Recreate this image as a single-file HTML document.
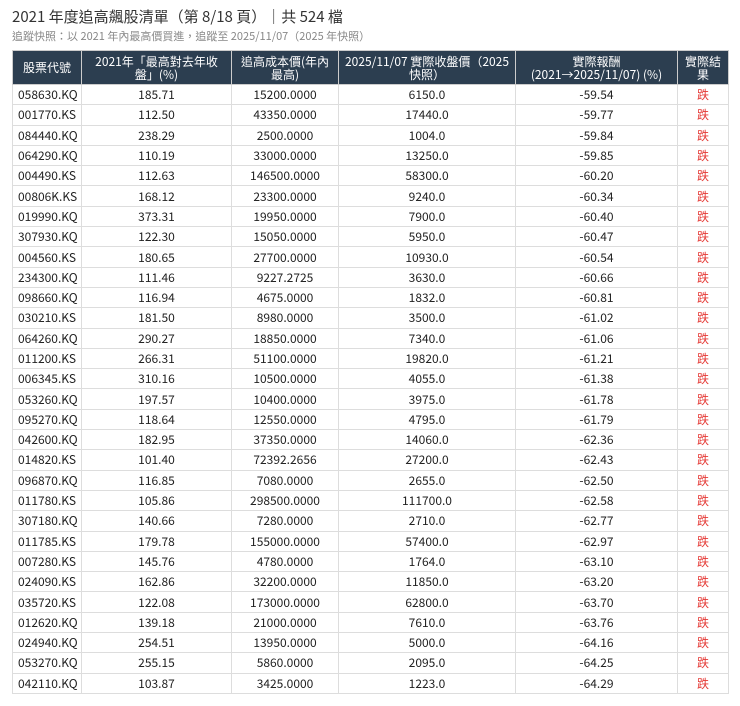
<!DOCTYPE html>
<html><head><meta charset="utf-8"><style>
body{margin:0;background:#fff;font-family:"Noto Sans CJK TC","Liberation Sans",sans-serif;color:#222}
.t{position:absolute;left:12px;top:6px;font-size:15px;color:#333;line-height:22px}
.s{position:absolute;left:12px;top:28px;font-size:11px;color:#888;line-height:16px}
table{position:absolute;left:12px;top:50px;border-collapse:collapse;width:716px;table-layout:fixed;font-size:12px}
th{background:#2c3e50;color:#fff;font-weight:normal;height:33px;line-height:13px;border:1px solid #ccc;padding:0 3px;text-align:center}
td{height:19.3px;border:1px solid #ddd;text-align:center;padding:0;line-height:19px}
td:first-child{text-align:left;padding-left:5px}
td.r{color:#e53935}
</style></head><body>
<div class="t">2021 年度追高飆股清單（第 8/18 頁）｜共 524 檔</div>
<div class="s">追蹤快照：以 2021 年內最高價買進，追蹤至 2025/11/07（2025 年快照）</div>
<table>
<colgroup><col style="width:69px"><col style="width:150px"><col style="width:107px"><col style="width:177px"><col style="width:162px"><col style="width:51px"></colgroup>
<tr><th>股票代號</th><th>2021年「最高對去年收<br>盤」(%)</th><th>追高成本價(年內<br>最高)</th><th>2025/11/07 實際收盤價（2025<br>快照）</th><th>實際報酬<br>(2021→2025/11/07) (%)</th><th>實際結<br>果</th></tr>
<tr><td>058630.KQ</td><td>185.71</td><td>15200.0000</td><td>6150.0</td><td>-59.54</td><td class="r">跌</td></tr>
<tr><td>001770.KS</td><td>112.50</td><td>43350.0000</td><td>17440.0</td><td>-59.77</td><td class="r">跌</td></tr>
<tr><td>084440.KQ</td><td>238.29</td><td>2500.0000</td><td>1004.0</td><td>-59.84</td><td class="r">跌</td></tr>
<tr><td>064290.KQ</td><td>110.19</td><td>33000.0000</td><td>13250.0</td><td>-59.85</td><td class="r">跌</td></tr>
<tr><td>004490.KS</td><td>112.63</td><td>146500.0000</td><td>58300.0</td><td>-60.20</td><td class="r">跌</td></tr>
<tr><td>00806K.KS</td><td>168.12</td><td>23300.0000</td><td>9240.0</td><td>-60.34</td><td class="r">跌</td></tr>
<tr><td>019990.KQ</td><td>373.31</td><td>19950.0000</td><td>7900.0</td><td>-60.40</td><td class="r">跌</td></tr>
<tr><td>307930.KQ</td><td>122.30</td><td>15050.0000</td><td>5950.0</td><td>-60.47</td><td class="r">跌</td></tr>
<tr><td>004560.KS</td><td>180.65</td><td>27700.0000</td><td>10930.0</td><td>-60.54</td><td class="r">跌</td></tr>
<tr><td>234300.KQ</td><td>111.46</td><td>9227.2725</td><td>3630.0</td><td>-60.66</td><td class="r">跌</td></tr>
<tr><td>098660.KQ</td><td>116.94</td><td>4675.0000</td><td>1832.0</td><td>-60.81</td><td class="r">跌</td></tr>
<tr><td>030210.KS</td><td>181.50</td><td>8980.0000</td><td>3500.0</td><td>-61.02</td><td class="r">跌</td></tr>
<tr><td>064260.KQ</td><td>290.27</td><td>18850.0000</td><td>7340.0</td><td>-61.06</td><td class="r">跌</td></tr>
<tr><td>011200.KS</td><td>266.31</td><td>51100.0000</td><td>19820.0</td><td>-61.21</td><td class="r">跌</td></tr>
<tr><td>006345.KS</td><td>310.16</td><td>10500.0000</td><td>4055.0</td><td>-61.38</td><td class="r">跌</td></tr>
<tr><td>053260.KQ</td><td>197.57</td><td>10400.0000</td><td>3975.0</td><td>-61.78</td><td class="r">跌</td></tr>
<tr><td>095270.KQ</td><td>118.64</td><td>12550.0000</td><td>4795.0</td><td>-61.79</td><td class="r">跌</td></tr>
<tr><td>042600.KQ</td><td>182.95</td><td>37350.0000</td><td>14060.0</td><td>-62.36</td><td class="r">跌</td></tr>
<tr><td>014820.KS</td><td>101.40</td><td>72392.2656</td><td>27200.0</td><td>-62.43</td><td class="r">跌</td></tr>
<tr><td>096870.KQ</td><td>116.85</td><td>7080.0000</td><td>2655.0</td><td>-62.50</td><td class="r">跌</td></tr>
<tr><td>011780.KS</td><td>105.86</td><td>298500.0000</td><td>111700.0</td><td>-62.58</td><td class="r">跌</td></tr>
<tr><td>307180.KQ</td><td>140.66</td><td>7280.0000</td><td>2710.0</td><td>-62.77</td><td class="r">跌</td></tr>
<tr><td>011785.KS</td><td>179.78</td><td>155000.0000</td><td>57400.0</td><td>-62.97</td><td class="r">跌</td></tr>
<tr><td>007280.KS</td><td>145.76</td><td>4780.0000</td><td>1764.0</td><td>-63.10</td><td class="r">跌</td></tr>
<tr><td>024090.KS</td><td>162.86</td><td>32200.0000</td><td>11850.0</td><td>-63.20</td><td class="r">跌</td></tr>
<tr><td>035720.KS</td><td>122.08</td><td>173000.0000</td><td>62800.0</td><td>-63.70</td><td class="r">跌</td></tr>
<tr><td>012620.KQ</td><td>139.18</td><td>21000.0000</td><td>7610.0</td><td>-63.76</td><td class="r">跌</td></tr>
<tr><td>024940.KQ</td><td>254.51</td><td>13950.0000</td><td>5000.0</td><td>-64.16</td><td class="r">跌</td></tr>
<tr><td>053270.KQ</td><td>255.15</td><td>5860.0000</td><td>2095.0</td><td>-64.25</td><td class="r">跌</td></tr>
<tr><td>042110.KQ</td><td>103.87</td><td>3425.0000</td><td>1223.0</td><td>-64.29</td><td class="r">跌</td></tr>
</table>
</body></html>
